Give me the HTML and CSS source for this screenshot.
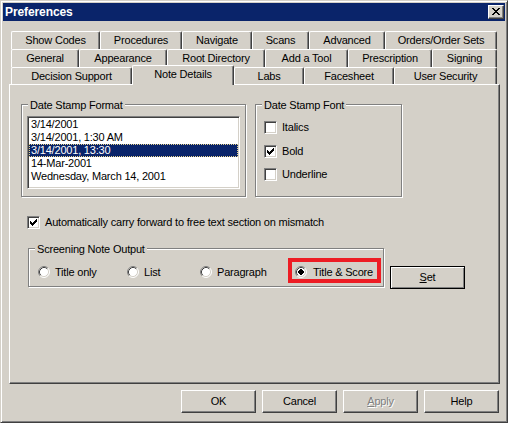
FILE: index.html
```html
<!DOCTYPE html>
<html>
<head>
<meta charset="utf-8">
<link rel="stylesheet" href="styles.css">
</head>
<body>
<div class="window">
  <div class="titlebar">
    <span class="title">Preferences</span>
    <span class="close-btn"><svg width="14" height="12" viewBox="0 0 14 12" shape-rendering="crispEdges"><path d="M3 2h2v1H3z M9 2h2v1H9z M4 3h2v1H4z M8 3h2v1H8z M5 4h4v1H5z M6 5h2v1H6z M5 6h4v1H5z M4 7h2v1H4z M8 7h2v1H8z M3 8h2v1H3z M9 8h2v1H9z" fill="#000"/></svg></span>
  </div>
  <div class="content">
    <div class="tabs">
      <div class="tabrow">
        <div class="tab w89">Show Codes</div>
        <div class="tab w82">Procedures</div>
        <div class="tab w70">Navigate</div>
        <div class="tab w57">Scans</div>
        <div class="tab w76">Advanced</div>
        <div class="tab w112">Orders/Order Sets</div>
      </div>
      <div class="tabrow">
        <div class="tab w68">General</div>
        <div class="tab w88">Appearance</div>
        <div class="tab w98">Root Directory</div>
        <div class="tab w83">Add a Tool</div>
        <div class="tab w84">Prescription</div>
        <div class="tab w65">Signing</div>
      </div>
      <div class="tabrow front">
        <div class="tab w121">Decision Support</div>
        <div class="tab w102 sel">Note Details</div>
        <div class="tab w70">Labs</div>
        <div class="tab w90">Facesheet</div>
        <div class="tab w103">User Security</div>
      </div>
    </div>
    <div class="panel">
      <div class="top-groups">
        <div class="group fmt">
          <div class="legend">Date Stamp Format</div>
          <div class="listbox">
            <div class="item">3/14/2001</div>
            <div class="item">3/14/2001, 1:30 AM</div>
            <div class="item selected">3/14/2001, 13:30</div>
            <div class="item">14-Mar-2001</div>
            <div class="item">Wednesday, March 14, 2001</div>
          </div>
        </div>
        <div class="group font">
          <div class="legend">Date Stamp Font</div>
          <div class="checks">
            <div class="check"><span class="cb"></span><span>Italics</span></div>
            <div class="check"><span class="cb"><svg width="11" height="11" viewBox="0 0 11 11" shape-rendering="crispEdges"><path d="M2 4h1v3H2z M3 5h1v3H3z M4 6h1v3H4z M5 5h1v3H5z M6 4h1v3H6z M7 3h1v3H7z M8 2h1v3H8z" fill="#000"/></svg></span><span>Bold</span></div>
            <div class="check"><span class="cb"></span><span>Underline</span></div>
          </div>
        </div>
      </div>
      <div class="check auto"><span class="cb"><svg width="11" height="11" viewBox="0 0 11 11" shape-rendering="crispEdges"><path d="M2 4h1v3H2z M3 5h1v3H3z M4 6h1v3H4z M5 5h1v3H5z M6 4h1v3H6z M7 3h1v3H7z M8 2h1v3H8z" fill="#000"/></svg></span><span>Automatically carry forward to free text section on mismatch</span></div>
      <div class="screen-row">
        <div class="group screen">
          <div class="legend">Screening Note Output</div>
          <div class="radios">
            <div class="opt w89"><svg class="radio" width="12" height="12" viewBox="0 0 12 12"><circle cx="6" cy="6" r="5" fill="#fff"/><path d="M2.11 9.89A5.5 5.5 0 0 1 9.89 2.11" fill="none" stroke="#808080"/><path d="M9.89 2.11A5.5 5.5 0 0 1 2.11 9.89" fill="none" stroke="#fff"/><path d="M2.82 9.18A4.5 4.5 0 0 1 9.18 2.82" fill="none" stroke="#404040"/><path d="M9.18 2.82A4.5 4.5 0 0 1 2.82 9.18" fill="none" stroke="#d4d0c8"/></svg><span>Title only</span></div>
            <div class="opt w73"><svg class="radio" width="12" height="12" viewBox="0 0 12 12"><circle cx="6" cy="6" r="5" fill="#fff"/><path d="M2.11 9.89A5.5 5.5 0 0 1 9.89 2.11" fill="none" stroke="#808080"/><path d="M9.89 2.11A5.5 5.5 0 0 1 2.11 9.89" fill="none" stroke="#fff"/><path d="M2.82 9.18A4.5 4.5 0 0 1 9.18 2.82" fill="none" stroke="#404040"/><path d="M9.18 2.82A4.5 4.5 0 0 1 2.82 9.18" fill="none" stroke="#d4d0c8"/></svg><span>List</span></div>
            <div class="opt w88"><svg class="radio" width="12" height="12" viewBox="0 0 12 12"><circle cx="6" cy="6" r="5" fill="#fff"/><path d="M2.11 9.89A5.5 5.5 0 0 1 9.89 2.11" fill="none" stroke="#808080"/><path d="M9.89 2.11A5.5 5.5 0 0 1 2.11 9.89" fill="none" stroke="#fff"/><path d="M2.82 9.18A4.5 4.5 0 0 1 9.18 2.82" fill="none" stroke="#404040"/><path d="M9.18 2.82A4.5 4.5 0 0 1 2.82 9.18" fill="none" stroke="#d4d0c8"/></svg><span>Paragraph</span></div>
            <div class="opt marked"><svg class="radio" width="12" height="12" viewBox="0 0 12 12"><circle cx="6" cy="6" r="5" fill="#fff"/><path d="M2.11 9.89A5.5 5.5 0 0 1 9.89 2.11" fill="none" stroke="#808080"/><path d="M9.89 2.11A5.5 5.5 0 0 1 2.11 9.89" fill="none" stroke="#fff"/><path d="M2.82 9.18A4.5 4.5 0 0 1 9.18 2.82" fill="none" stroke="#404040"/><path d="M9.18 2.82A4.5 4.5 0 0 1 2.82 9.18" fill="none" stroke="#d4d0c8"/><rect x="4" y="4" width="4" height="4" fill="#000"/><rect x="5" y="3" width="2" height="6" fill="#000"/><rect x="3" y="5" width="6" height="2" fill="#000"/></svg><span>Title &amp; Score</span></div>
          </div>
        </div>
        <div class="btn default set"><u>S</u>et</div>
      </div>
    </div>
    <div class="buttons">
      <div class="btn">OK</div>
      <div class="btn">Cancel</div>
      <div class="btn disabled"><u>A</u>pply</div>
      <div class="btn">Help</div>
    </div>
  </div>
</div>
</body>
</html>
```

FILE: styles.css
```css
* { box-sizing: border-box; }
html, body { margin: 0; padding: 0; }
body {
  width: 508px;
  height: 423px;
  overflow: hidden;
  background: #d4d0c8;
  font-family: "Liberation Sans", Arial, sans-serif;
  font-size: 11px;
  letter-spacing: -0.2px;
  color: #000;
}
.window {
  width: 508px;
  height: 423px;
  border: 1px solid;
  border-color: #d4d0c8 #404040 #404040 #d4d0c8;
  box-shadow: inset 1px 1px 0 #fff, inset -1px -1px 0 #808080;
  padding: 2px;
  background: #d4d0c8;
  display: flex;
  flex-direction: column;
}
.titlebar {
  height: 18px;
  flex: none;
  background: #0a246a;
  display: flex;
  align-items: center;
  padding: 0 1px 0 2px;
}
.title {
  flex: 1;
  color: #fff;
  font-weight: bold;
  font-size: 12px;
  line-height: 18px;
  letter-spacing: -0.1px;
}
.close-btn {
  width: 16px;
  height: 14px;
  display: block;
  background: #d4d0c8;
  border: 1px solid;
  border-color: #fff #404040 #404040 #fff;
  box-shadow: inset -1px -1px 0 #808080;
}
.close-btn svg { display: block; }
.content {
  flex: 1;
  display: flex;
  flex-direction: column;
  align-items: flex-start;
}
.tabs {
  margin: 10px 0 0 8px;
  width: 486px;
  display: flex;
  flex-direction: column;
  z-index: 1;
}
.tabrow {
  display: flex;
  align-items: flex-start;
  height: 18px;
}
.tabrow.front { height: 17px; }
.tab {
  height: 18px;
  flex: none;
  background: #d4d0c8;
  border-top: 1px solid #fff;
  border-left: 1px solid #fff;
  border-right: 1px solid #404040;
  box-shadow: inset -1px 0 0 #808080;
  border-radius: 2px 2px 0 0;
  text-align: center;
  line-height: 17px;
  white-space: nowrap;
}
.front .tab { height: 17px; line-height: 16px; }
.front .tab.sel {
  height: 20px;
  margin-top: -2px;
  margin-bottom: -1px;
  line-height: 17px;
  padding-bottom: 2px;
  z-index: 2;
}
.w57 { width: 57px; }
.w65 { width: 65px; }
.w68 { width: 68px; }
.w70 { width: 70px; }
.w73 { width: 73px; }
.w76 { width: 76px; }
.w82 { width: 82px; }
.w83 { width: 83px; }
.w84 { width: 84px; }
.w88 { width: 88px; }
.w89 { width: 89px; }
.w90 { width: 90px; }
.w98 { width: 98px; }
.w102 { width: 102px; }
.w103 { width: 103px; }
.w112 { width: 112px; }
.w121 { width: 121px; }
.panel {
  margin-left: 6px;
  width: 491px;
  height: 300px;
  flex: none;
  border: 1px solid;
  border-color: #fff #404040 #404040 #fff;
  box-shadow: inset -1px -1px 0 #808080;
  padding-left: 11px;
  display: flex;
  flex-direction: column;
  align-items: flex-start;
}
.top-groups {
  display: flex;
  gap: 9px;
  margin-top: 19px;
}
.group {
  border: 1px solid #808080;
  box-shadow: inset 1px 1px 0 #fff, 1px 1px 0 #fff;
  display: flex;
  flex-direction: column;
  align-items: flex-start;
}
.group.fmt { width: 225px; height: 93px; }
.group.font { width: 147px; height: 93px; }
.group.screen { width: 356px; height: 39px; }
.legend {
  margin: -6px 0 0 6px;
  padding: 0 2px;
  line-height: 13px;
  background: #d4d0c8;
  white-space: nowrap;
}
.listbox {
  margin: 4px 0 0 5px;
  width: 213px;
  height: 73px;
  background: #fff;
  border: 1px solid;
  border-color: #808080 #fff #fff #808080;
  box-shadow: inset 1px 1px 0 #404040, inset -1px -1px 0 #d4d0c8;
  padding: 1px;
}
.item {
  height: 13px;
  line-height: 13px;
  padding-left: 2px;
  white-space: nowrap;
}
.item.selected {
  background: #0a246a;
  color: #fff;
  outline: 1px dotted #e8d48c;
  outline-offset: -1px;
}
.checks {
  display: flex;
  flex-direction: column;
  gap: 10.5px;
  margin: 9px 0 0 8px;
}
.check {
  display: flex;
  align-items: center;
  gap: 5px;
  height: 13px;
  line-height: 13px;
  white-space: nowrap;
}
.cb {
  width: 13px;
  height: 13px;
  flex: none;
  display: block;
  background: #fff;
  border: 1px solid;
  border-color: #808080 #fff #fff #808080;
  box-shadow: inset 1px 1px 0 #404040, inset -1px -1px 0 #d4d0c8;
}
.cb svg { display: block; }
.check.auto { margin: 19px 0 0 6px; }
.screen-row {
  display: flex;
  align-items: flex-start;
  margin: 19px 0 0 7px;
}
.radios {
  display: flex;
  margin-top: 2px;
  padding-left: 9px;
}
.opt {
  height: 25px;
  padding-top: 8px;
  display: flex;
  align-items: flex-start;
  gap: 5px;
  line-height: 12px;
  white-space: nowrap;
}
.opt.marked {
  width: 93px;
  border: 4px solid #ed1c24;
  padding: 4px 0 0 3px;
  gap: 6px;
}
.radio { display: block; flex: none; }
.btn {
  width: 75px;
  height: 23px;
  flex: none;
  background: #d4d0c8;
  border: 1px solid;
  border-color: #fff #404040 #404040 #fff;
  box-shadow: inset -1px -1px 0 #808080;
  text-align: center;
  line-height: 20px;
}
.btn.default {
  border-color: #000;
  box-shadow: inset 1px 1px 0 #fff, inset -1px -1px 0 #808080;
}
.btn.set { margin: 18px 0 0 6px; }
.btn.disabled {
  color: #808080;
  text-shadow: 1px 1px 0 #fff;
}
.buttons {
  align-self: stretch;
  display: flex;
  justify-content: flex-end;
  gap: 6px;
  margin-top: 6px;
  padding-right: 6px;
}
```
